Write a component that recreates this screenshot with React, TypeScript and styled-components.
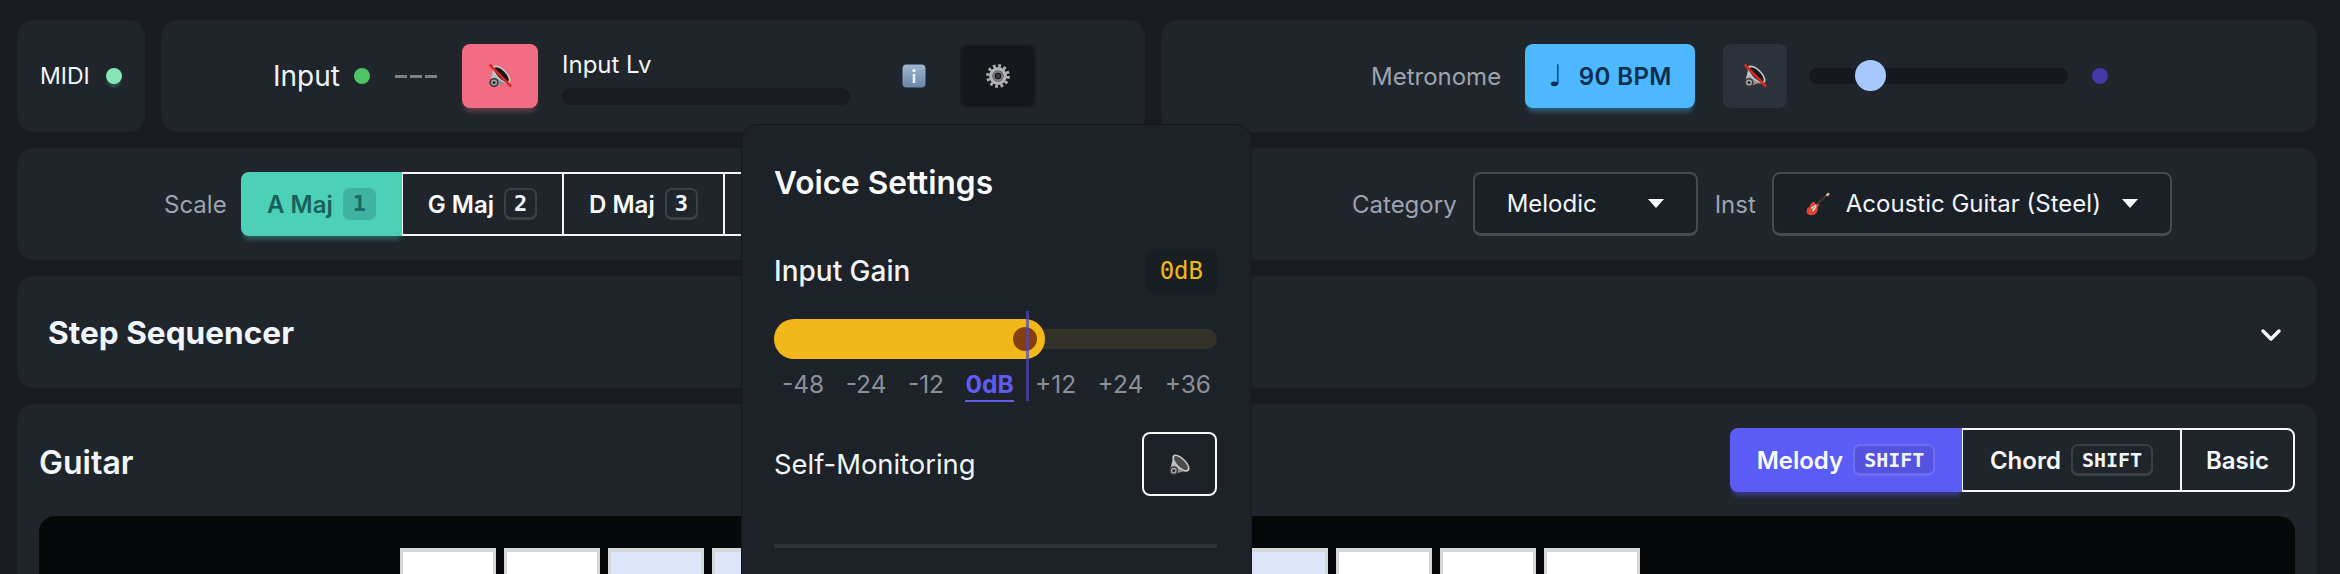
import styled, { createGlobalStyle } from "styled-components";

const GlobalStyle = createGlobalStyle`
  html, body {
    margin: 0;
    padding: 0;
    background: #181c21;
    font-family: Inter, "Liberation Sans", sans-serif;
    overflow: hidden;
  }
  * { box-sizing: border-box; }
`;

const Page = styled.div`
  position: relative;
  width: 2340px;
  height: 574px;
  padding: 20px 23px 0 17px;
  display: flex;
  flex-direction: column;
  gap: 16px;
  overflow: hidden;
`;

const Row = styled.div`
  display: flex;
  gap: 16px;
`;

const Panel = styled.div`
  background: #1f252b;
  border-radius: 16px;
  height: 112px;
  display: flex;
  align-items: center;
  flex: none;
`;

const MidiPanel = styled(Panel)`
  width: 128px;
  padding-left: 23px;
  gap: 16px;
  font-size: 23px;
  color: #f1f5f9;
`;

const InputPanel = styled(Panel)`
  width: 984px;
  padding-left: 112px;
`;

const MetroPanel = styled(Panel)`
  width: 1156px;
  padding-left: 210px;
`;

const Dot = styled.span<{ $color: string; $glow?: boolean }>`
  width: 16px;
  height: 16px;
  border-radius: 50%;
  background: ${(p) => p.$color};
  flex: none;
  box-shadow: ${(p) => (p.$glow ? "0 4px 3px -1px rgba(110,231,183,0.25)" : "none")};
`;

const InputLabel = styled.span`
  font-size: 28px;
  color: #f1f5f9;
  width: 65px;
  margin-right: 16px;
`;

const Dashes = styled.span`
  width: 42px;
  height: 3px;
  margin: 0 25px;
  background: repeating-linear-gradient(90deg, #7b8087 0 12px, transparent 12px 15px);
`;

const SoundButton = styled.button<{ $bg: string; $w: number; $shadow?: string; $border?: string }>`
  width: ${(p) => p.$w}px;
  height: 64px;
  flex: none;
  border: ${(p) => p.$border ?? "none"};
  border-radius: 8px;
  padding: 0;
  background: ${(p) => p.$bg};
  box-shadow: ${(p) => p.$shadow ?? "none"};
  display: flex;
  align-items: center;
  justify-content: center;
`;

const LevelBox = styled.div`
  width: 288px;
  margin-left: 24px;
  display: flex;
  flex-direction: column;
  gap: 8px;
  height: 64px;
  padding-top: 5px;
  color: #f1f5f9;
  font-size: 24px;
`;

const LevelLabel = styled.span`
  line-height: 31px;
`;

const LevelTrack = styled.div`
  height: 17px;
  border-radius: 9px;
  background: #171b20;
`;

const InfoWrap = styled.span`
  margin-left: 52px;
  display: flex;
`;

const GearButton = styled.button`
  width: 76px;
  height: 64px;
  margin-left: 34px;
  flex: none;
  padding: 0;
  border: 2px solid #191d22;
  border-radius: 8px;
  background: #14181d;
  display: flex;
  align-items: center;
  justify-content: center;
`;

const MutedLabel = styled.span`
  color: #9ca3af;
  font-size: 24px;
`;

const MetroLabel = styled(MutedLabel)`
  width: 128px;
  margin-right: 26px;
`;

const BpmButton = styled.button`
  width: 170px;
  height: 64px;
  flex: none;
  border: none;
  border-radius: 8px;
  padding: 0;
  background: #4db8ff;
  color: #0b2f4d;
  font: 600 24px Inter, sans-serif;
  letter-spacing: 0.4px;
  box-shadow: 0 6px 4px -2px rgba(77, 184, 255, 0.35);
  display: flex;
  align-items: center;
  justify-content: center;
  gap: 16px;
`;

const Note = styled.span`
  font-family: "DejaVu Sans", sans-serif;
  font-size: 30px;
  line-height: 1;
  font-weight: 400;
`;

const MetroMute = styled.div`
  margin-left: 28px;
  display: flex;
`;

const VolumeTrack = styled.div`
  position: relative;
  width: 259px;
  height: 16px;
  margin-left: 22px;
  border-radius: 8px;
  background: #15191e;
`;

const VolumeThumb = styled.span`
  position: absolute;
  left: 46px;
  top: -8px;
  width: 31px;
  height: 31px;
  border-radius: 50%;
  background: #a6c8ff;
`;

const EndDot = styled(Dot)`
  margin-left: 24px;
`;

const ControlsPanel = styled(Panel)`
  width: 2300px;
  padding-left: 147px;
`;

const ScaleLabel = styled(MutedLabel)`
  width: 60px;
  margin-right: 17px;
`;

const Segments = styled.div`
  display: flex;
  height: 64px;
  flex: none;
`;

const Segment = styled.div<{ $w: number; $active?: string; $color?: string; $last?: boolean }>`
  width: ${(p) => p.$w}px;
  height: 100%;
  flex: none;
  display: flex;
  align-items: center;
  justify-content: center;
  gap: 10px;
  font-size: 24px;
  font-weight: 600;
  color: ${(p) => p.$color ?? "#f8fafc"};
  background: ${(p) => p.$active ?? "transparent"};
  border: ${(p) => (p.$active ? "none" : "2px solid #f4f6f8")};
  border-left-width: ${(p) => (p.$active ? 0 : "1px")};
  border-right-width: ${(p) => (p.$active ? 0 : "1px")};
  border-radius: ${(p) => (p.$active ? "8px 0 0 8px" : p.$last ? "0 8px 8px 0" : 0)};
  ${(p) => (p.$last ? "border-right-width: 2px;" : "")}
`;

const ScaleSegment = styled(Segment)`
  box-shadow: ${(p) => (p.$active ? "0 6px 4px -2px rgba(77,208,184,0.3)" : "none")};
`;

const ModeSegment = styled(Segment)`
  box-shadow: ${(p) => (p.$active ? "0 6px 4px -2px rgba(91,91,246,0.4)" : "none")};
`;

const Kbd = styled.span<{ $tone?: "teal" | "indigo"; $digit?: boolean }>`
  font-family: "DejaVu Sans Mono", "Liberation Mono", monospace;
  font-size: ${(p) => (p.$digit ? 22 : 20)}px;
  font-weight: 700;
  line-height: 1;
  padding: 0 ${(p) => (p.$digit ? 8 : 9)}px;
  height: 32px;
  display: inline-flex;
  align-items: center;
  border-radius: 7px;
  color: ${(p) => (p.$tone === "teal" ? "#176a62" : "#f1f5f9")};
  background: ${(p) =>
    p.$tone === "teal" ? "#3fb3a2" : p.$tone === "indigo" ? "#5353df" : "#1f252b"};
  border: 2px solid
    ${(p) => (p.$tone === "teal" ? "#3fb3a2" : p.$tone === "indigo" ? "#6d6df0" : "#3a4047")};
  border-bottom-width: 3px;
`;

const Spacer = styled.div<{ $w: number }>`
  width: ${(p) => p.$w}px;
  flex: none;
`;

const Select = styled.div<{ $w: number }>`
  width: ${(p) => p.$w}px;
  height: 64px;
  flex: none;
  display: flex;
  align-items: center;
  gap: 16px;
  padding: 0 32px;
  border: 2px solid #464b51;
  border-bottom-width: 3px;
  border-radius: 8px;
  background: #1b2026;
  color: #f1f5f9;
  font-size: 24px;
`;

const SelectText = styled.span`
  flex: 1;
  white-space: nowrap;
`;

const Caret = styled.span`
  width: 0;
  height: 0;
  flex: none;
  border-left: 8px solid transparent;
  border-right: 8px solid transparent;
  border-top: 9px solid #f8fafc;
`;

const SequencerPanel = styled(Panel)`
  width: 2300px;
  padding: 0 30px 0 31px;
  justify-content: space-between;
`;

const SequencerTitle = styled.h2`
  margin: 0;
  font-size: 31.6px;
  font-weight: 700;
  color: #f1f5f9;
`;

const ChevronWrap = styled.span`
  display: flex;
  margin-top: 6px;
`;

const GuitarPanel = styled.div`
  width: 2300px;
  height: 300px;
  background: #1f252b;
  border-radius: 16px;
  padding: 24px 22px 0 22px;
  display: flex;
  flex-direction: column;
  gap: 24px;
`;

const GuitarHead = styled.div`
  height: 64px;
  display: flex;
  align-items: center;
  justify-content: space-between;
`;

const GuitarTitle = styled.h2`
  margin: 4px 0 0;
  font-size: 32px;
  font-weight: 600;
  color: #f1f5f9;
`;

const Fretboard = styled.div`
  height: 200px;
  background: #070809;
  border-radius: 16px 16px 0 0;
  padding: 32px 0 0 361px;
  display: flex;
  gap: 8px;
`;

const Key = styled.div<{ $sharp?: boolean }>`
  width: 96px;
  height: 120px;
  flex: none;
  background: ${(p) => (p.$sharp ? "#dce6f8" : "#ffffff")};
  border: 3px solid #d4d6d9;
  border-bottom: none;
  border-top-width: 4px;
`;

const Popover = styled.div`
  position: absolute;
  left: 741px;
  top: 124px;
  width: 511px;
  height: 470px;
  background: #1c2228;
  border: 1px solid #14181c;
  border-radius: 16px;
  padding: 36px 34px 0 32px;
  display: flex;
  flex-direction: column;
`;

const PopTitle = styled.h3`
  margin: 0 0 44px;
  font-size: 31.6px;
  line-height: 44px;
  font-weight: 600;
  color: #f8fafc;
`;

const GainHead = styled.div`
  display: flex;
  align-items: center;
  justify-content: space-between;
  height: 44px;
  margin-bottom: 26px;
  font-size: 28px;
  font-weight: 500;
  color: #f1f5f9;
`;

const GainValue = styled.span`
  font-family: "DejaVu Sans Mono", monospace;
  font-size: 24px;
  line-height: 30px;
  color: #f2b81a;
  background: #191e23;
  border-radius: 8px;
  padding: 7px 14px;
`;

const GainSlider = styled.div`
  position: relative;
  height: 40px;
`;

const GainTrack = styled.div`
  position: absolute;
  left: 0;
  right: 0;
  top: 10px;
  height: 20px;
  border-radius: 10px;
  background: #33322a;
`;

const GainFill = styled.div`
  position: absolute;
  left: 0;
  top: 0;
  width: 271px;
  height: 40px;
  border-radius: 20px;
  background: #f2b81a;
`;

const GainThumb = styled.span`
  position: absolute;
  left: 239px;
  top: 8px;
  width: 24px;
  height: 24px;
  border-radius: 50%;
  background: #853f0e;
`;

const ZeroLine = styled.span`
  position: absolute;
  left: 252px;
  top: -8px;
  width: 3px;
  height: 90px;
  background: rgba(79, 70, 190, 0.7);
`;

const Scale = styled.div`
  display: flex;
  justify-content: space-between;
  padding: 0 6px 0 8px;
  margin-top: 9px;
  height: 32px;
  font-size: 24.5px;
  line-height: 32px;
  color: #8b9098;
`;

const ScaleMark = styled.span<{ $on?: boolean }>`
  color: ${(p) => (p.$on ? "#5f5bf0" : "#8b9098")};
  font-weight: ${(p) => (p.$on ? 700 : 400)};
  ${(p) => (p.$on ? "border-bottom: 2px solid #5f5bf0; height: 34px;" : "")}
`;

const MonitorRow = styled.div`
  display: flex;
  align-items: center;
  justify-content: space-between;
  margin-top: 32px;
  font-size: 27.4px;
  color: #f1f5f9;
`;

const Divider = styled.div`
  height: 4px;
  margin-top: 48px;
  background: #2d333b;
`;

// the reference uses colour emoji here, no emoji font is installed
const Speaker = ({ muted, size = 24 }: { muted?: boolean; size?: number }) => (
  <svg width={size} height={size} viewBox="0 0 24 24">
    <defs>
      <linearGradient id="spkBody" x1="0" y1="0" x2="1" y2="1">
        <stop offset="0" stopColor="#e2e2e2" />
        <stop offset="1" stopColor="#6a6a6a" />
      </linearGradient>
    </defs>
    <path d="M6 3 L2.5 16 L8 21.5 L21 18 Z" fill="url(#spkBody)" />
    <ellipse cx="13.5" cy="10.5" rx="5.4" ry="11.5" transform="rotate(-45 13.5 10.5)" fill="#c9c9c9" />
    <ellipse cx="13.5" cy="10.5" rx="3.8" ry="9.6" transform="rotate(-45 13.5 10.5)" fill={muted ? "#171717" : "#4a4a4a"} />
    <circle cx="6" cy="18.5" r="4.6" fill="#3a3a3a" />
    <circle cx="6" cy="18.5" r="3" fill="#a8a8a8" />
    <circle cx="6" cy="18.5" r="1.5" fill="#2a2a2a" />
    {muted && <line x1="1.5" y1="0.5" x2="23" y2="22.5" stroke="#d6281f" strokeWidth="2.6" />}
  </svg>
);

const InfoIcon = () => (
  <svg width="24" height="24" viewBox="0 0 24 24">
    <defs>
      <linearGradient id="infoBg" x1="0" y1="0" x2="0" y2="1">
        <stop offset="0" stopColor="#9fb6cf" />
        <stop offset="1" stopColor="#6a87a8" />
      </linearGradient>
    </defs>
    <rect x="0.5" y="0.5" width="23" height="23" rx="4" fill="url(#infoBg)" />
    <circle cx="12" cy="6.5" r="1.6" fill="#f4f7fa" />
    <rect x="10.8" y="10" width="2.4" height="9" fill="#f4f7fa" />
  </svg>
);

const GearIcon = () => (
  <svg width="24" height="24" viewBox="0 0 24 24">
    <circle cx="12" cy="12" r="10.2" fill="none" stroke="#b0b0b0" strokeWidth="3.4" strokeDasharray="2.7 2.64" />
    <circle cx="12" cy="12" r="7.2" fill="none" stroke="#b4b4b4" strokeWidth="3.4" />
    <circle cx="12" cy="12" r="4.3" fill="none" stroke="#7d7d7d" strokeWidth="2" />
    <circle cx="12" cy="12" r="2.2" fill="#3a3d40" />
  </svg>
);

const GuitarIcon = () => (
  <svg width="24" height="24" viewBox="0 0 24 24">
    <path d="M9 14 L21 3" stroke="#4a3628" strokeWidth="2" />
    <path d="M19.5 3 L22 0.5 L24 2 L21.5 4.5 Z" fill="#d9b38c" />
    <path d="M8 9.5 L9.5 12 L14 12.5 L11.5 15 Q12.5 19 9.5 22 Q5 24.5 1.5 22 Q-0.5 19 1.5 16 L3.5 15 Q4 11 8 9.5Z" fill="#de4433" />
    <path d="M5 15.5 L10 12.5 L10.5 15 L7 19.5 Z" fill="#efe9e4" />
    <path d="M5.5 18 L9 14.5" stroke="#555" strokeWidth="1" />
  </svg>
);

const Chevron = () => (
  <svg width="32" height="32" viewBox="0 0 24 24" fill="none" stroke="#f8fafc" strokeWidth="2.6" strokeLinecap="round" strokeLinejoin="round">
    <path d="M6 9l6 6 6-6" />
  </svg>
);

const keys = [false, false, true, true, false, false, false, false, true, false, false, false];

const App = () => (
  <>
    <GlobalStyle />
    <Page>
      <Row>
        <MidiPanel>
          MIDI
          <Dot $color="#86e5b5" $glow />
        </MidiPanel>
        <InputPanel>
          <InputLabel>Input</InputLabel>
          <Dot $color="#4ec463" />
          <Dashes />
          <SoundButton $bg="#f26d83" $w={76} $shadow="0 6px 4px -2px rgba(242,109,131,0.3)">
            <Speaker muted />
          </SoundButton>
          <LevelBox>
            <LevelLabel>Input Lv</LevelLabel>
            <LevelTrack />
          </LevelBox>
          <InfoWrap>
            <InfoIcon />
          </InfoWrap>
          <GearButton>
            <GearIcon />
          </GearButton>
        </InputPanel>
        <MetroPanel>
          <MetroLabel>Metronome</MetroLabel>
          <BpmButton>
            <Note>♩</Note> 90 BPM
          </BpmButton>
          <MetroMute>
            <SoundButton $bg="#2d333b" $w={64}>
              <Speaker muted />
            </SoundButton>
          </MetroMute>
          <VolumeTrack>
            <VolumeThumb />
          </VolumeTrack>
          <EndDot $color="#4338a8" />
        </MetroPanel>
      </Row>
      <ControlsPanel>
        <ScaleLabel>Scale</ScaleLabel>
        <Segments>
          <ScaleSegment $w={161} $active="#4dd0b8" $color="#17615a">
            A Maj <Kbd $tone="teal" $digit>1</Kbd>
          </ScaleSegment>
          <ScaleSegment $w={161}>
            G Maj <Kbd $digit>2</Kbd>
          </ScaleSegment>
          <ScaleSegment $w={161}>
            D Maj <Kbd $digit>3</Kbd>
          </ScaleSegment>
          <ScaleSegment $w={161} />
        </Segments>
        <Spacer $w={467} />
        <MutedLabel>Category</MutedLabel>
        <Spacer $w={16} />
        <Select $w={225}>
          <SelectText>Melodic</SelectText>
          <Caret />
        </Select>
        <Spacer $w={17} />
        <MutedLabel>Inst</MutedLabel>
        <Spacer $w={16} />
        <Select $w={400}>
          <GuitarIcon />
          <SelectText>Acoustic Guitar (Steel)</SelectText>
          <Caret />
        </Select>
      </ControlsPanel>
      <SequencerPanel>
        <SequencerTitle>Step Sequencer</SequencerTitle>
        <ChevronWrap>
          <Chevron />
        </ChevronWrap>
      </SequencerPanel>
      <GuitarPanel>
        <GuitarHead>
          <GuitarTitle>Guitar</GuitarTitle>
          <Segments>
            <ModeSegment $w={232} $active="#5b5bf6">
              Melody <Kbd $tone="indigo">SHIFT</Kbd>
            </ModeSegment>
            <ModeSegment $w={219}>
              Chord <Kbd>SHIFT</Kbd>
            </ModeSegment>
            <ModeSegment $w={114} $last>
              Basic
            </ModeSegment>
          </Segments>
        </GuitarHead>
        <Fretboard>
          {keys.map((sharp, i) => (
            <Key key={i} $sharp={sharp} />
          ))}
        </Fretboard>
      </GuitarPanel>
      <Popover>
        <PopTitle>Voice Settings</PopTitle>
        <GainHead>
          Input Gain
          <GainValue>0dB</GainValue>
        </GainHead>
        <GainSlider>
          <GainTrack />
          <GainFill />
          <GainThumb />
          <ZeroLine />
        </GainSlider>
        <Scale>
          <ScaleMark>-48</ScaleMark>
          <ScaleMark>-24</ScaleMark>
          <ScaleMark>-12</ScaleMark>
          <ScaleMark $on>0dB</ScaleMark>
          <ScaleMark>+12</ScaleMark>
          <ScaleMark>+24</ScaleMark>
          <ScaleMark>+36</ScaleMark>
        </Scale>
        <MonitorRow>
          Self-Monitoring
          <SoundButton $bg="transparent" $w={75} $border="2px solid #f4f6f8">
            <Speaker size={23} />
          </SoundButton>
        </MonitorRow>
        <Divider />
      </Popover>
    </Page>
  </>
);

export default App;
